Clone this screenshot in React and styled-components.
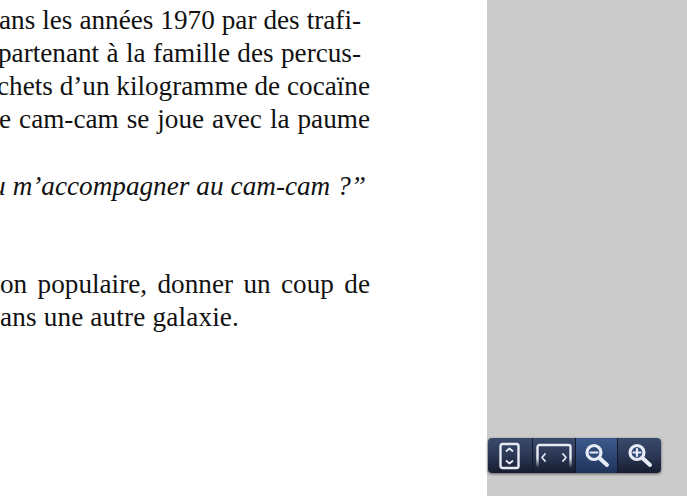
import React from "react";
import styled, { createGlobalStyle } from "styled-components";

const Global = createGlobalStyle`
  html, body { margin: 0; padding: 0; }
  body { width: 687px; height: 496px; overflow: hidden; background: #ccc; }
`;

const Viewer = styled.div`
  position: relative;
  width: 687px;
  height: 496px;
  background: #cbcbcb;
  overflow: hidden;
`;

const Page = styled.main`
  width: 487px;
  height: 496px;
  background: #fff;
  overflow: hidden;
  padding-top: 4px;
  box-sizing: border-box;
  font-family: "Liberation Serif", "Times New Roman", serif;
  font-size: 27.2px;
  line-height: 33px;
  color: #111;
`;

const Line = styled.div`
  margin-left: ${(p) => p.$start}px;
  width: ${(p) => p.$end - p.$start}px;
  margin-top: ${(p) => p.$gap || 0}px;
  white-space: nowrap;
  text-align: justify;
  text-align-last: ${(p) => (p.$last ? "left" : "justify")};
  letter-spacing: ${(p) => (p.$last ? "0.16px" : "normal")};
  font-style: ${(p) => (p.$italic ? "italic" : "normal")};
`;

const Toolbar = styled.div`
  position: absolute;
  left: 488px;
  top: 438px;
  display: flex;
  height: 35px;
  border-radius: 4px;
  overflow: hidden;
  box-shadow: 0 1px 3px rgba(0, 0, 0, 0.55);
`;

const ToolButton = styled.div`
  width: ${(p) => p.$w}px;
  height: 35px;
  display: flex;
  align-items: center;
  justify-content: center;
  border-left: ${(p) => (p.$first ? "none" : "1px solid #14192b")};
  box-sizing: border-box;
  background: ${(p) =>
    p.$active
      ? "linear-gradient(#3d5a8c 0%, #2d4675 50%, #1f3358 100%)"
      : "linear-gradient(#3b4a6c 0%, #2b3755 50%, #171d30 100%)"};
`;

const stroke = { fill: "none", stroke: "#e6ebf5", strokeLinecap: "round", strokeLinejoin: "round" };

const FitHeight = () => (
  <svg width="24" height="30" viewBox="0 0 24 30">
    <rect x="2.5" y="3" width="18" height="24" rx="2" {...stroke} strokeWidth="2.4" />
    <path d="M8.5 10 11.5 7.5l3 2.5M8.5 20l3 2.5 3-2.5" {...stroke} strokeWidth="1.8" />
  </svg>
);

const FitWidth = () => (
  <svg width="36" height="30" viewBox="0 0 36 30">
    <defs>
      <linearGradient id="fade" x1="0" y1="0" x2="0" y2="1">
        <stop offset="0.6" stopColor="#e6ebf5" />
        <stop offset="1" stopColor="#e6ebf5" stopOpacity="0.1" />
      </linearGradient>
    </defs>
    <path d="M1.5 26V6a2 2 0 0 1 2-2h29a2 2 0 0 1 2 2v20" fill="none" stroke="url(#fade)" strokeWidth="2.4" />
    <path d="M9 13l-3 3.5 3 3.5M27 13l3 3.5-3 3.5" {...stroke} strokeWidth="1.8" />
  </svg>
);

const Magnifier = ({ plus }) => (
  <svg width="28" height="28" viewBox="0 0 28 28">
    <circle cx="11" cy="10.5" r="7" fill="#2f4a78" stroke="#e6ebf5" strokeWidth="3.2" />
    <path d="M17 16.5 24 23" {...stroke} strokeWidth="4" />
    <path d={plus ? "M7.5 10.5h7M11 7v7" : "M7.5 10.5h7"} {...stroke} strokeWidth="2.2" />
  </svg>
);

export default function App() {
  return (
    <Viewer>
      <Global />
      <Page>
        <Line $start={-1} $end={361}>ans les années 1970 par des trafi-</Line>
        <Line $start={-2} $end={361}>partenant à la famille des percus-</Line>
        <Line $start={-3} $end={370}>chets d’un kilogramme de cocaïne</Line>
        <Line $start={-1} $end={370}>e cam-cam se joue avec la paume</Line>
        <Line $start={-8} $end={366} $gap={34} $italic>u m’accompagner au cam-cam ?”</Line>
        <Line $start={0} $end={370} $gap={65}>on populaire, donner un coup de</Line>
        <Line $start={0} $end={370} $last>ans une autre galaxie.</Line>
      </Page>
      <Toolbar>
        <ToolButton $w={44} $first><FitHeight /></ToolButton>
        <ToolButton $w={43}><FitWidth /></ToolButton>
        <ToolButton $w={42} $active><Magnifier /></ToolButton>
        <ToolButton $w={44}><Magnifier plus /></ToolButton>
      </Toolbar>
    </Viewer>
  );
}
